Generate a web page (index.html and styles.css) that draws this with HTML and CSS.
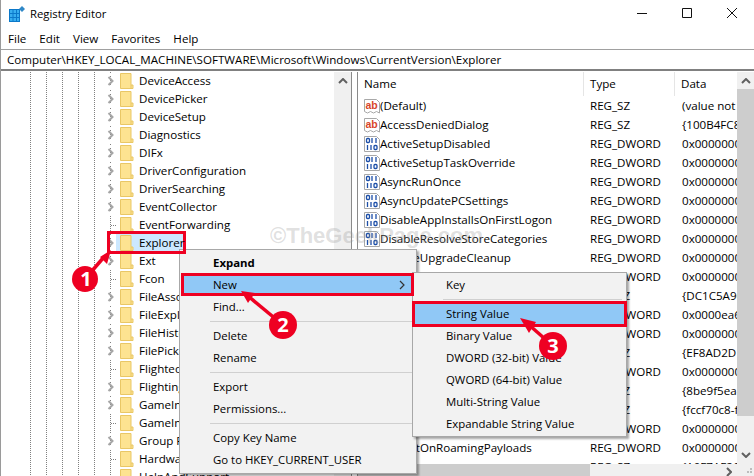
FILE: index.html
```html
<!DOCTYPE html>
<html lang="en">
<head>
<meta charset="utf-8">
<title>Registry Editor</title>
<link rel="stylesheet" href="styles.css">
</head>
<body>
<svg class="defs" width="0" height="0" aria-hidden="true">
  <symbol id="folder" viewBox="0 0 14 16">
    <path d="M.5.5h10.500v11.500h2v3.500H.5z" fill="#fde391" stroke="#e9c766"/>
    <path d="M11 12v3.500" stroke="#e9c766"/>
  </symbol>
  <symbol id="chev" viewBox="0 0 8 10">
    <path d="M1.500 1l4 4-4 4" fill="none" stroke="#a6a6a6" stroke-width="2"/>
  </symbol>
  <symbol id="sz" viewBox="0 0 16 16">
    <path d="M.5 1.500h12l3 3v10.500l-3-1.500-3 1.500-3-1.500-3 1.500-3-1.500z" fill="#fff" stroke="#a8a8a8"/>
    <text x="1.500" y="11" class="ab">ab</text>
  </symbol>
  <symbol id="bin" viewBox="0 0 16 16">
    <path d="M.5 .5h12l3 3v12H.5z" fill="#fff" stroke="#a8a8a8"/>
    <g fill="none" stroke="#1d4fa8" stroke-width="1.300">
      <rect x="2.500" y="2.500" width="3" height="4" rx="1"/>
      <path d="M8 2v5M12 2v5"/>
      <path d="M3.500 9v5M7 9v5"/>
      <rect x="10" y="9.500" width="3" height="4" rx="1"/>
    </g>
  </symbol>
</svg>

<div class="window">
  <header class="titlebar">
    <svg class="appicon" width="16" height="16" viewBox="0 0 16 16" aria-hidden="true">
      <path d="M0 3h11v13H0z" fill="#0b78c9"/>
      <path d="M1 4h2.500v3H1zM4.500 4H7v3H4.500zM8 4h2v3H8zM1 8h2.500v3H1zM4.500 8H7v3H4.500zM8 8h2v3H8zM1 12h2.500v3H1zM4.500 12H7v3H4.500zM8 12h2v3H8z" fill="#37aef0"/>
      <path d="M13 0l3 3-3 3-3-3z" fill="#2f88c7"/>
    </svg>
    <span class="title">Registry Editor</span>
    <div class="controls">
      <svg width="10" height="10" viewBox="0 0 10 10" aria-hidden="true"><path d="M0 5.500h10" stroke="#111"/></svg>
      <svg width="10" height="10" viewBox="0 0 10 10" aria-hidden="true"><path d="M.5.5h9v9h-9z" fill="none" stroke="#111"/></svg>
      <svg width="10" height="10" viewBox="0 0 10 10" aria-hidden="true"><path d="M0 0l10 10M10 0L0 10" stroke="#111"/></svg>
    </div>
  </header>
  <nav class="menubar"><span>File</span><span>Edit</span><span>View</span><span>Favorites</span><span>Help</span></nav>
  <div class="address">Computer\HKEY_LOCAL_MACHINE\SOFTWARE\Microsoft\Windows\CurrentVersion\Explorer</div>

  <main class="panes">
    <section class="tree">
      <ul class="nodes">
        <li class="node"><svg class="chev"><use href="#chev"/></svg><svg class="folder"><use href="#folder"/></svg><span>DeviceAccess</span></li>
        <li class="node"><svg class="chev"><use href="#chev"/></svg><svg class="folder"><use href="#folder"/></svg><span>DevicePicker</span></li>
        <li class="node"><svg class="chev"><use href="#chev"/></svg><svg class="folder"><use href="#folder"/></svg><span>DeviceSetup</span></li>
        <li class="node"><svg class="chev"><use href="#chev"/></svg><svg class="folder"><use href="#folder"/></svg><span>Diagnostics</span></li>
        <li class="node"><svg class="chev"><use href="#chev"/></svg><svg class="folder"><use href="#folder"/></svg><span>DIFx</span></li>
        <li class="node"><svg class="chev"><use href="#chev"/></svg><svg class="folder"><use href="#folder"/></svg><span>DriverConfiguration</span></li>
        <li class="node"><svg class="chev"><use href="#chev"/></svg><svg class="folder"><use href="#folder"/></svg><span>DriverSearching</span></li>
        <li class="node"><svg class="chev"><use href="#chev"/></svg><svg class="folder"><use href="#folder"/></svg><span>EventCollector</span></li>
        <li class="node"><i class="leaf"></i><svg class="folder"><use href="#folder"/></svg><span>EventForwarding</span></li>
        <li class="node selected"><svg class="chev"><use href="#chev"/></svg><svg class="folder"><use href="#folder"/></svg><span>Explorer</span></li>
        <li class="node"><svg class="chev"><use href="#chev"/></svg><svg class="folder"><use href="#folder"/></svg><span>Ext</span></li>
        <li class="node"><i class="leaf"></i><svg class="folder"><use href="#folder"/></svg><span>Fcon</span></li>
        <li class="node"><svg class="chev"><use href="#chev"/></svg><svg class="folder"><use href="#folder"/></svg><span>FileAssociation</span></li>
        <li class="node"><svg class="chev"><use href="#chev"/></svg><svg class="folder"><use href="#folder"/></svg><span>FileExplorer</span></li>
        <li class="node"><svg class="chev"><use href="#chev"/></svg><svg class="folder"><use href="#folder"/></svg><span>FileHistory</span></li>
        <li class="node"><svg class="chev"><use href="#chev"/></svg><svg class="folder"><use href="#folder"/></svg><span>FilePicker</span></li>
        <li class="node"><i class="leaf"></i><svg class="folder"><use href="#folder"/></svg><span>FlightedFeatures</span></li>
        <li class="node"><svg class="chev"><use href="#chev"/></svg><svg class="folder"><use href="#folder"/></svg><span>FlightingRegistry</span></li>
        <li class="node"><svg class="chev"><use href="#chev"/></svg><svg class="folder"><use href="#folder"/></svg><span>GameInput</span></li>
        <li class="node"><i class="leaf"></i><svg class="folder"><use href="#folder"/></svg><span>GameInstaller</span></li>
        <li class="node"><svg class="chev"><use href="#chev"/></svg><svg class="folder"><use href="#folder"/></svg><span>Group Policy</span></li>
        <li class="node"><i class="leaf"></i><svg class="folder"><use href="#folder"/></svg><span>HardwareIdentification</span></li>
        <li class="node"><i class="leaf"></i><svg class="folder"><use href="#folder"/></svg><span>HelpAndSupport</span></li>
      </ul>
      <div class="vbar tree-bar">
        <svg class="arrow" width="10" height="6" viewBox="0 0 10 6" aria-hidden="true"><path d="M1 5l4-4 4 4" fill="none" stroke="#606060" stroke-width="2"/></svg>
      </div>
    </section>

    <section class="list">
      <div class="table">
        <div class="head"><span class="hname">Name</span><span class="htype">Type</span><span class="hdata">Data</span></div>
        <div class="row"><svg class="val"><use href="#sz"/></svg><span class="name">(Default)</span><span class="type">REG_SZ</span><span class="data">(value not set)</span></div>
        <div class="row"><svg class="val"><use href="#sz"/></svg><span class="name">AccessDeniedDialog</span><span class="type">REG_SZ</span><span class="data">{100B4FC8-74C1}</span></div>
        <div class="row"><svg class="val"><use href="#bin"/></svg><span class="name">ActiveSetupDisabled</span><span class="type">REG_DWORD</span><span class="data">0x00000000 (0)</span></div>
        <div class="row"><svg class="val"><use href="#bin"/></svg><span class="name">ActiveSetupTaskOverride</span><span class="type">REG_DWORD</span><span class="data">0x00000001 (1)</span></div>
        <div class="row"><svg class="val"><use href="#bin"/></svg><span class="name">AsyncRunOnce</span><span class="type">REG_DWORD</span><span class="data">0x00000001 (1)</span></div>
        <div class="row"><svg class="val"><use href="#bin"/></svg><span class="name">AsyncUpdatePCSettings</span><span class="type">REG_DWORD</span><span class="data">0x00000001 (1)</span></div>
        <div class="row"><svg class="val"><use href="#bin"/></svg><span class="name">DisableAppInstallsOnFirstLogon</span><span class="type">REG_DWORD</span><span class="data">0x00000001 (1)</span></div>
        <div class="row"><svg class="val"><use href="#bin"/></svg><span class="name">DisableResolveStoreCategories</span><span class="type">REG_DWORD</span><span class="data">0x00000001 (1)</span></div>
        <div class="row"><svg class="val"><use href="#bin"/></svg><span class="name">DisableUpgradeCleanup</span><span class="type">REG_DWORD</span><span class="data">0x00000001 (1)</span></div>
        <div class="row"><svg class="val"><use href="#bin"/></svg><span class="name">EarlyAppResolverStart</span><span class="type">REG_DWORD</span><span class="data">0x00000001 (1)</span></div>
        <div class="row"><svg class="val"><use href="#sz"/></svg><span class="name">ExplorerShellPath</span><span class="type">REG_SZ</span><span class="data">{DC1C5A9C-E88A}</span></div>
        <div class="row"><svg class="val"><use href="#bin"/></svg><span class="name">FileOpenDialog</span><span class="type">REG_DWORD</span><span class="data">0x0000ea60 (60000)</span></div>
        <div class="row"><svg class="val"><use href="#bin"/></svg><span class="name">GlobalAssocChanged</span><span class="type">REG_DWORD</span><span class="data">0x00000001 (1)</span></div>
        <div class="row"><svg class="val"><use href="#sz"/></svg><span class="name">GlobalFolderSettings</span><span class="type">REG_SZ</span><span class="data">{EF8AD2D1-AE36}</span></div>
        <div class="row"><svg class="val"><use href="#bin"/></svg><span class="name">IconUnderline</span><span class="type">REG_DWORD</span><span class="data">0x00000002 (2)</span></div>
        <div class="row"><svg class="val"><use href="#sz"/></svg><span class="name">ListViewPopupControl</span><span class="type">REG_SZ</span><span class="data">{8be9f5ea-e746}</span></div>
        <div class="row"><svg class="val"><use href="#sz"/></svg><span class="name">LVPopupSearchControl</span><span class="type">REG_SZ</span><span class="data">{fccf70c8-f4d7}</span></div>
        <div class="row"><svg class="val"><use href="#bin"/></svg><span class="name">MachineOobeUpdates</span><span class="type">REG_DWORD</span><span class="data">0x00000001 (1)</span></div>
        <div class="row"><svg class="val"><use href="#bin"/></svg><span class="name">NoWaitOnRoamingPayloads</span><span class="type">REG_DWORD</span><span class="data">0x00000001 (1)</span></div>
        <div class="row"><svg class="val"><use href="#sz"/></svg><span class="name">PINLogon</span><span class="type">REG_SZ</span><span class="data">{A0F7AF2C-58C1}</span></div>
      </div>
      <div class="vbar list-bar">
        <div class="cap"><svg class="arrow" width="10" height="6" viewBox="0 0 10 6" aria-hidden="true"><path d="M1 5l4-4 4 4" fill="none" stroke="#606060" stroke-width="2"/></svg></div>
        <div class="thumb"></div>
        <svg class="arrow down" width="10" height="6" viewBox="0 0 10 6" aria-hidden="true"><path d="M1 1l4 4 4-4" fill="none" stroke="#606060" stroke-width="2"/></svg>
      </div>
      <div class="hbar">
        <div class="hthumb"></div>
        <svg class="arrow" width="6" height="10" viewBox="0 0 6 10" aria-hidden="true"><path d="M1 1l4 4-4 4" fill="none" stroke="#606060" stroke-width="2"/></svg>
      </div>
      <div class="corner">
        <svg width="8" height="8" viewBox="0 0 8 8" aria-hidden="true"><path d="M5 1h2v2H5zM2 4h2v2H2zM5 4h2v2H5z" fill="#bdbdbd"/></svg>
      </div>
    </section>
  </main>

  <div class="watermark">©TheGeekPage.com</div>

  <div class="menu context">
    <div class="item bold">Expand</div>
    <div class="item hot">New<svg class="sub" width="6" height="10" viewBox="0 0 6 10" aria-hidden="true"><path d="M1 1l4 4-4 4" fill="none" stroke="#333" stroke-width="1.200"/></svg></div>
    <div class="item">Find...</div>
    <hr>
    <div class="item">Delete</div>
    <div class="item">Rename</div>
    <hr>
    <div class="item">Export</div>
    <div class="item">Permissions...</div>
    <hr>
    <div class="item">Copy Key Name</div>
    <div class="item">Go to HKEY_CURRENT_USER</div>
  </div>

  <div class="menu submenu">
    <div class="item">Key</div>
    <hr>
    <div class="item hot">String Value</div>
    <div class="item">Binary Value</div>
    <div class="item">DWORD (32-bit) Value</div>
    <div class="item">QWORD (64-bit) Value</div>
    <div class="item">Multi-String Value</div>
    <div class="item">Expandable String Value</div>
  </div>

  <svg class="marks" width="754" height="476" viewBox="0 0 754 476" aria-hidden="true">
    <g fill="none" stroke="#ee0022" stroke-width="3">
      <rect x="108.500" y="232.500" width="76" height="20"/>
      <rect x="182.500" y="274.500" width="230" height="20"/>
      <rect x="413.500" y="302.500" width="212" height="23"/>
    </g>
    <g fill="#ee0022">
      <path d="M85 279L104 257" stroke="#ee0022" stroke-width="3.500"/>
      <path d="M111 250l-11 7 7 7z"/>
      <circle cx="85" cy="279" r="13"/>
      <path d="M283 325L248 296" stroke="#ee0022" stroke-width="3.500"/>
      <path d="M241 291l14 2-7 10z"/>
      <circle cx="283" cy="325" r="14"/>
      <path d="M553 346L528 324" stroke="#ee0022" stroke-width="3.500"/>
      <path d="M520 318l16 4-7 11z"/>
      <circle cx="553" cy="346" r="14"/>
    </g>
    <g class="num">
      <text x="86" y="286">1</text>
      <text x="283" y="332">2</text>
      <text x="553" y="353">3</text>
    </g>
  </svg>
</div>
</body>
</html>
```

FILE: styles.css
```css
* { box-sizing: border-box; }
html, body { margin: 0; padding: 0; }
body {
  width: 754px;
  height: 476px;
  overflow: hidden;
  background: #fff;
  font: 11.600px/16px "Open Sans", "Noto Sans", sans-serif;
  color: #000;
}
.defs { position: absolute; }
.window {
  position: relative;
  width: 754px;
  height: 476px;
  display: flex;
  flex-direction: column;
  overflow: hidden;
  border-left: 1px solid #9a9a9a;
}
.titlebar {
  flex: 0 0 28px;
  display: flex;
  align-items: center;
  padding-left: 8px;
}
.title { margin-left: 5px; font-size: 11.300px; }
.controls {
  margin-left: auto;
  display: flex;
  gap: 35px;
  padding-right: 17px;
  margin-top: -2px;
}
.menubar {
  flex: 0 0 21px;
  display: flex;
  align-items: center;
  gap: 13px;
  padding-left: 7px;
}
.address {
  flex: 0 0 22px;
  border-top: 1px solid #a0a0a0;
  border-bottom: 2px solid #808080;
  padding-left: 6px;
  line-height: 19px;
  white-space: nowrap;
}
.panes {
  flex: 1;
  min-height: 0;
  display: flex;
  padding: 1px 0 0 1px;
}
.tree {
  width: 350px;
  display: flex;
  border-right: 1px solid #8a8a8a;
  background-color: #fff;
  background-image:
    linear-gradient(#808080 50%, transparent 50%),
    linear-gradient(#808080 50%, transparent 50%),
    linear-gradient(#808080 50%, transparent 50%),
    linear-gradient(#808080 50%, transparent 50%),
    linear-gradient(#808080 50%, transparent 50%),
    linear-gradient(#808080 50%, transparent 50%);
  background-repeat: repeat-y;
  background-size: 1px 2px;
  background-position: 28px 0, 44px 0, 60px 0, 76px 0, 92px 0, 108px 0;
}
.nodes {
  list-style: none;
  flex: 1;
  margin: 0;
  padding: 0;
  min-width: 0;
  overflow: hidden;
}
.node {
  height: 18px;
  display: flex;
  align-items: center;
  padding-left: 105px;
  white-space: nowrap;
  position: relative;
}
.chev {
  width: 8px;
  height: 10px;
  margin-right: 5px;
  outline: 3px solid #fff;
}
.leaf {
  width: 5px;
  height: 1px;
  margin: 0 4px 0 4px;
  background: repeating-linear-gradient(90deg, #808080 0 1px, transparent 1px 2px);
}
.folder { width: 14px; height: 16px; margin-right: 5px; flex: none; }
.selected::after {
  content: "";
  position: absolute;
  left: 114px;
  right: 151px;
  top: 0;
  bottom: 0;
  background: #cce8ff;
  z-index: 0;
}
.selected .folder, .selected span { position: relative; z-index: 1; }
.vbar { background: #f0f0f0; display: flex; flex-direction: column; align-items: center; }
.tree-bar { flex: 0 0 17px; padding-top: 6px; }
.list {
  flex: 1;
  min-width: 0;
  margin-left: 5px;
  border-left: 1px solid #8a8a8a;
  display: grid;
  grid-template-columns: 1fr 17px;
  grid-template-rows: 1fr 12px;
  overflow: hidden;
}
.table { min-height: 0; min-width: 0; overflow: hidden; }
.head {
  height: 24px;
  display: grid;
  grid-template-columns: 226px 91px 1fr;
  align-items: stretch;
  line-height: 24px;
}
.head span { padding-left: 6px; border-right: 1px solid #e5e5e5; }
.head .hdata { border-right: 0; }
.row {
  height: 19px;
  display: flex;
  align-items: center;
  white-space: nowrap;
  padding-left: 6px;
}
.val { width: 16px; height: 16px; flex: none; }
.ab { font: bold 10.500px "Liberation Sans", sans-serif; fill: #d8452a; }
.name { flex: 0 0 210px; overflow: hidden; }
.type { flex: 0 0 92px; }
.data { flex: none; }
.list-bar { grid-row: 1; grid-column: 2; }
.cap { height: 17px; width: 100%; display: flex; justify-content: center; align-items: center; }
.thumb { flex: 1; width: 100%; background: #cdcdcd; margin-bottom: 36px; }
.arrow.down { margin-bottom: 6px; }
.hbar {
  grid-row: 2;
  grid-column: 1;
  background: #f0f0f0;
  display: flex;
  align-items: center;
  justify-content: space-between;
  padding-right: 5px;
}
.hbar .arrow { margin-top: 3px; }
.hthumb { width: 232px; height: 100%; background: #cdcdcd; }
.corner {
  grid-row: 2;
  grid-column: 2;
  background: #f0f0f0;
  display: flex;
  justify-content: flex-end;
  align-items: flex-end;
  padding: 0 1px 1px 0;
}
.watermark {
  position: absolute;
  left: 269px;
  top: 221px;
  font: bold 22px/30px "Liberation Sans", sans-serif;
  color: rgba(150, 150, 150, .3);
  white-space: nowrap;
}
.menu {
  position: absolute;
  background: #f2f2f2;
  border: 1px solid #a8a8a8;
  box-shadow: 2px 2px 2px rgba(0, 0, 0, .35);
  padding: 2px;
  font-size: 11.400px;
}
.context { left: 178px; top: 249px; width: 238px; height: 225px; }
.submenu { left: 411px; top: 272px; width: 215px; height: 165px; padding-top: 1px; }
.item {
  height: 22px;
  line-height: 22px;
  padding-left: 31px;
  position: relative;
  white-space: nowrap;
}
.bold { font-weight: 700; }
.hot { background: #90c8f6; }
.sub { position: absolute; right: 9px; top: 6px; }
.menu hr {
  height: 1px;
  border: 0;
  margin: 3px 2px 0 28px;
  background: #d0d0d0;
}
.menu hr + .item { margin-top: 3px; }
.marks { position: absolute; left: -1px; top: 0; }
.num text {
  font: bold 20px "Open Sans", sans-serif;
  fill: #fff;
  text-anchor: middle;
}
```
